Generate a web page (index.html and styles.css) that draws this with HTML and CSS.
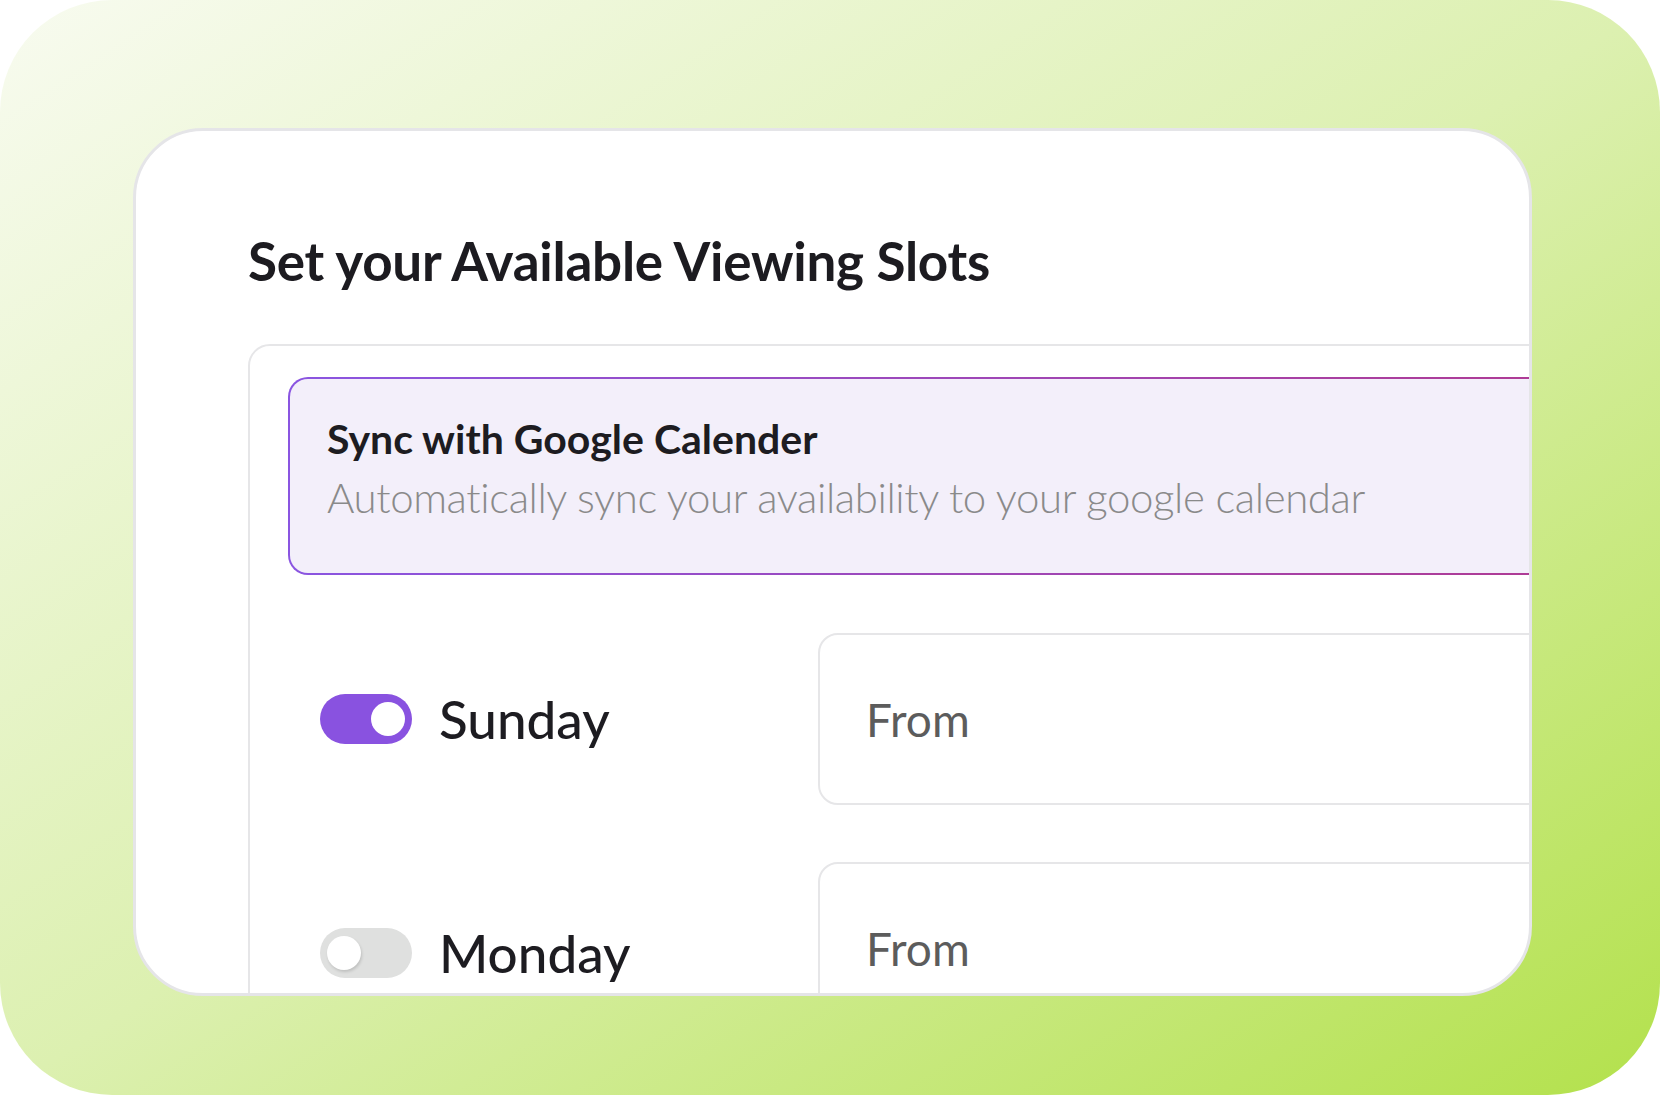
FILE: index.html
```html
<!DOCTYPE html>
<html lang="en">
<head>
<meta charset="utf-8">
<title>Set your Available Viewing Slots</title>
<link rel="stylesheet" href="styles.css">
</head>
<body>
<div class="frame">
  <div class="card">
    <h1 class="title">Set your Available Viewing Slots</h1>
    <div class="panel">
      <div class="sync">
        <div class="sync-title">Sync with Google Calender</div>
        <div class="sync-sub">Automatically sync your availability to your google calendar</div>
      </div>
      <div class="row">
        <div class="day">
          <span class="toggle on"><span class="knob"></span></span>
          <span class="day-name">Sunday</span>
        </div>
        <div class="field">From</div>
      </div>
      <div class="row">
        <div class="day">
          <span class="toggle off"><span class="knob"></span></span>
          <span class="day-name">Monday</span>
        </div>
        <div class="field">From</div>
      </div>
    </div>
  </div>
</div>
</body>
</html>
```
FILE: styles.css
```css
* { box-sizing: border-box; }
html, body { margin: 0; padding: 0; background: #ffffff; }
body {
  width: 1660px;
  height: 1096px;
  overflow: hidden;
  font-family: Lato, "Open Sans", sans-serif;
}
.frame {
  width: 1660px;
  height: 1095px;
  border-radius: 112px;
  background: linear-gradient(to bottom right, #f8fbf0 0%, #dcf0b0 50%, #b3e14c 100%);
  padding: 128px 0 0 133px;
  overflow: hidden;
}
.card {
  width: 1399px;
  height: 868px;
  background: #ffffff;
  border: 3px solid #e5e5e8;
  border-radius: 70px;
  overflow: hidden;
  padding: 98px 0 0 112px;
}
.title {
  margin: 0 0 51px 0;
  font-size: 53px;
  line-height: 64px;
  font-weight: 700;
  letter-spacing: -0.25px;
  color: #1c1b20;
  white-space: nowrap;
}
.panel {
  width: 1500px;
  border: 2px solid #e6e6e8;
  border-radius: 22px;
  padding: 31px 0 0 38px;
  height: 900px;
}
.sync {
  width: 1400px;
  border: 2px solid transparent;
  border-radius: 20px;
  background:
    linear-gradient(#f3effa, #f3effa) padding-box,
    linear-gradient(90deg, #8a55e1 0%, #b3388c 100%) border-box;
  padding: 35px 0 50px 37px;
}
.sync-title {
  font-size: 41px;
  line-height: 50px;
  font-weight: 700;
  letter-spacing: 0;
  color: #1d1c21;
  white-space: nowrap;
}
.sync-sub {
  margin-top: 7px;
  font-size: 42px;
  line-height: 52px;
  font-weight: 300;
  letter-spacing: -0.4px;
  color: #8a8a8a;
  white-space: nowrap;
}
.row {
  display: flex;
  align-items: center;
  margin-top: 58px;
  padding-left: 32px;
}
.row + .row { margin-top: 57px; }
.day {
  width: 498px;
  display: flex;
  align-items: center;
  gap: 27px;
  flex-shrink: 0;
}
.row + .row .day { padding-top: 10px; }
.toggle {
  position: relative;
  width: 92px;
  height: 50px;
  border-radius: 25px;
  flex-shrink: 0;
}
.toggle.on { background: #8952e0; }
.toggle.off { background: #dfe0df; }
.knob {
  position: absolute;
  top: 8px;
  width: 34px;
  height: 34px;
  border-radius: 50%;
  background: #ffffff;
}
.toggle.on .knob { right: 7px; }
.toggle.off .knob { left: 7px; box-shadow: 1px 2px 3px rgba(0, 0, 0, 0.14); }
.day-name {
  font-size: 53px;
  line-height: 64px;
  font-weight: 500;
  color: #1d1c21;
  white-space: nowrap;
}
.field {
  width: 900px;
  height: 172px;
  flex-shrink: 0;
  border: 2px solid #e6e6e8;
  border-radius: 20px;
  display: flex;
  align-items: center;
  padding-left: 46px;
  font-size: 46px;
  font-weight: 400;
  color: #5c5c5c;
}
```
